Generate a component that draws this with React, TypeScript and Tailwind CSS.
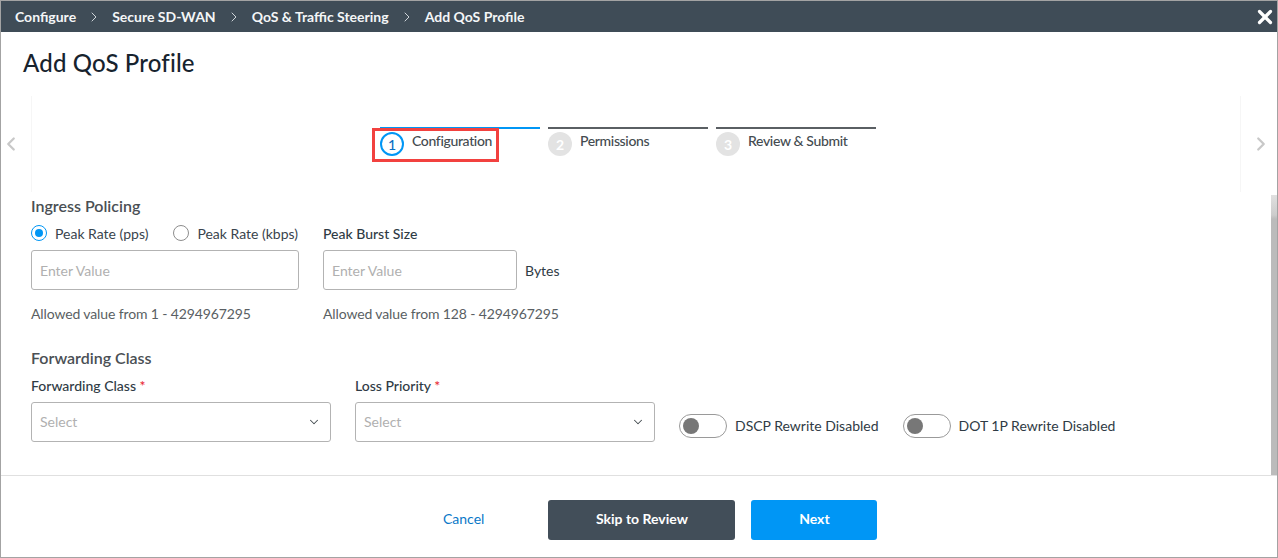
import { ChevronDown, ChevronLeft, ChevronRight, X } from "lucide-react";

const Crumb = ({ children, last }: { children: string; last?: boolean }) => (
  <>
    <span className="text-[14px] font-bold text-[#f4f6f7]">{children}</span>
    {!last && <ChevronRight size={16} strokeWidth={1.5} className="mx-[10px] text-[#cfd5da]" />}
  </>
);

const Step = ({ n, label, active }: { n: number; label: string; active?: boolean }) => (
  <div className={`w-[160px] border-t-2 pt-[3px] ${active ? "border-[#0096f5]" : "border-[#5a5f63]"}`}>
    <div className="flex items-start">
      <div
        className={
          active
            ? "flex h-6 w-6 items-center justify-center rounded-full border-2 border-[#0096f5] text-[14px] font-medium text-[#0a6fc2]"
            : "flex h-6 w-6 items-center justify-center rounded-full bg-[#e3e3e3] text-[14px] font-bold text-white"
        }
      >
        {n}
      </div>
      <span className="ml-2 text-[14px] leading-[18px] font-medium tracking-[-0.35px] text-[#444b50]">{label}</span>
    </div>
  </div>
);

const Radio = ({ on, label }: { on?: boolean; label: string }) => (
  <div className="flex items-center">
    <span
      className={
        on
          ? "flex h-4 w-4 items-center justify-center rounded-full border border-[#0096f5]"
          : "flex h-4 w-4 items-center justify-center rounded-full border border-[#8d8d8d]"
      }
    >
      {on && <span className="h-2 w-2 rounded-full bg-[#0096f5]" />}
    </span>
    <span className="ml-2 text-[14px] text-[#39444d]">{label}</span>
  </div>
);

const Select = () => (
  <div className="flex h-10 w-[300px] items-center justify-between rounded-[3px] border border-[#b3b3b3] pr-[9px] pl-2">
    <span className="mb-[2px] text-[14px] text-[#b0b0b0]">Select</span>
    <ChevronDown size={14} strokeWidth={1.75} className="text-[#444b50]" />
  </div>
);

const Toggle = ({ label }: { label: string }) => (
  <div className="flex items-center">
    <div className="flex h-6 w-12 items-center rounded-full border border-[#9a9a9a] pl-[3px]">
      <span className="h-4 w-4 rounded-full bg-[#777777]" />
    </div>
    <span className="mb-[2px] ml-2 text-[14px] text-[#2f3b45]">{label}</span>
  </div>
);

export default function App() {
  return (
    <div className="flex h-[558px] w-[1278px] flex-col overflow-hidden border border-[#a3a3a3] bg-white font-['Lato',sans-serif]">
      <div className="flex h-[31px] shrink-0 items-center justify-between bg-[#3f4c57] pr-[1px] pl-[14px]">
        <div className="flex items-center">
          <Crumb>Configure</Crumb>
          <Crumb>Secure SD-WAN</Crumb>
          <Crumb>QoS &amp; Traffic Steering</Crumb>
          <Crumb last>Add QoS Profile</Crumb>
        </div>
        <X size={22} strokeWidth={3.5} className="text-white" />
      </div>

      <div className="h-[64px] shrink-0 pt-[15px] pl-[22px] text-[24px] leading-[32px] font-medium tracking-[0.15px] text-[#17232e]">
        Add QoS Profile
      </div>

      <div className="flex h-[96px] shrink-0 items-center">
        <ChevronLeft size={22} strokeWidth={2.5} className="-ml-[1px] text-[#c8c8c8]" />
        <div className="ml-[9px] flex h-full flex-1 justify-center border-x border-[#f6f6f6] pt-[31px] pr-[16px]">
          <div className="relative flex gap-2">
            <div className="absolute top-[1px] -left-2 h-[34px] w-[127px] border-[3px] border-[#f2413f]" />
            <Step n={1} label="Configuration" active />
            <Step n={2} label="Permissions" />
            <Step n={3} label="Review & Submit" />
          </div>
        </div>
        <ChevronRight size={22} strokeWidth={2.5} className="mr-[5px] ml-[9px] text-[#c8c8c8]" />
      </div>

      <div className="relative h-[284px] shrink-0 border-b border-[#e0e0e0] pt-[2px] pl-[30px]">
        <div className="absolute top-[3px] right-0 bottom-0 w-[6px] bg-[linear-gradient(#e0e0e0,#cccccc_20px,#bbbbbb_24px)]" />
        <div className="text-[16px] leading-[24px] font-semibold text-[#4a4f54]">Ingress Policing</div>

        <div className="mt-[3px] flex">
          <div className="w-[268px]">
            <div className="flex h-[24px] items-center gap-[25px]">
              <Radio on label="Peak Rate (pps)" />
              <Radio label="Peak Rate (kbps)" />
            </div>
            <div className="mt-[5px] flex h-10 items-center rounded-[3px] border border-[#b3b3b3] pl-2 text-[14px] text-[#b0b0b0]">
              Enter Value
            </div>
            <div className="mt-[14px] text-[14px] leading-[20px] tracking-[-0.12px] text-[#5a5f63]">Allowed value from 1 - 4294967295</div>
          </div>
          <div className="ml-6">
            <div className="flex h-[24px] items-center text-[14px] font-medium text-[#2f3b45]">Peak Burst Size</div>
            <div className="mt-[5px] flex items-center">
              <div className="flex h-10 w-[194px] items-center rounded-[3px] border border-[#b3b3b3] pl-2 text-[14px] text-[#b0b0b0]">
                Enter Value
              </div>
              <span className="ml-2 text-[14px] text-[#2f3b45]">Bytes</span>
            </div>
            <div className="mt-[14px] text-[14px] leading-[20px] tracking-[-0.12px] text-[#5a5f63]">Allowed value from 128 - 4294967295</div>
          </div>
        </div>

        <div className="mt-[22px] text-[16px] leading-[24px] font-semibold text-[#4a4f54]">Forwarding Class</div>
        <div className="mt-[4px] flex items-end">
          <div>
            <div className="mb-[4px] h-[24px] text-[14px] leading-[24px] font-medium text-[#2f3b45]">
              Forwarding Class <span className="text-[#e8212b]">*</span>
            </div>
            <Select />
          </div>
          <div className="ml-6">
            <div className="mb-[4px] h-[24px] text-[14px] leading-[24px] font-medium text-[#2f3b45]">
              Loss Priority <span className="text-[#e8212b]">*</span>
            </div>
            <Select />
          </div>
          <div className="mb-1 ml-6 flex h-6 gap-6">
            <Toggle label="DSCP Rewrite Disabled" />
            <Toggle label="DOT 1P Rewrite Disabled" />
          </div>
        </div>
      </div>

      <div className="flex flex-1 items-start pt-6 pl-[442px]">
        <span className="mt-[9px] text-[14px] leading-[20px] text-[#0a78c8]">Cancel</span>
        <button className="ml-[64px] h-10 w-[187px] rounded-[3px] bg-[#424e59] pb-[3px] text-[14px] font-bold text-white">
          Skip to Review
        </button>
        <button className="ml-4 h-10 w-[126px] rounded-[3px] bg-[#0096f5] pb-[3px] text-[14px] font-bold text-white">Next</button>
      </div>
    </div>
  );
}
